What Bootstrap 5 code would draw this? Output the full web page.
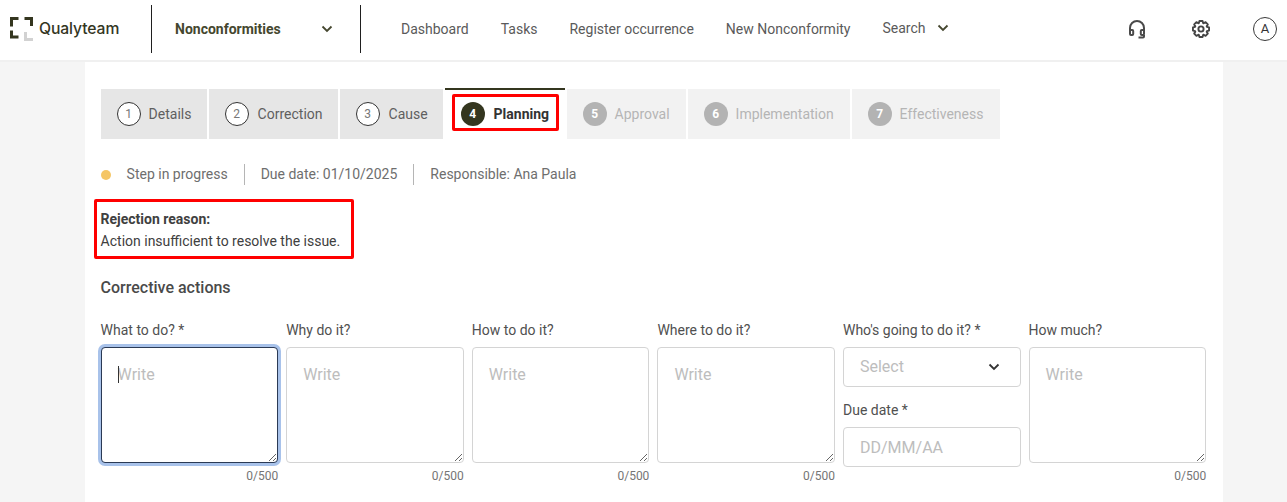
<!DOCTYPE html>
<html lang="en">
<head>
<meta charset="utf-8">
<title>Qualyteam</title>
<link href="https://cdn.jsdelivr.net/npm/bootstrap@5.3.0/dist/css/bootstrap.min.css" rel="stylesheet">
<style>
html,body{height:502px;overflow:hidden}
body{background:#f5f5f5;font-family:Roboto,"Liberation Sans",sans-serif;color:#404040;font-size:14px}
.topbar{height:62px;background:#fff;border-bottom:2px solid #f0f0f0;padding:0 0 2px}
.brand{width:151px;padding-left:10px;gap:6px;height:48px}
.brand-name{font-family:Inter,Roboto,sans-serif;font-size:15.7px;font-weight:500;color:#34361f;letter-spacing:-.1px}
.vline{width:1px;height:48px;background:#1f1f1f;flex:none}
.module{width:208px;height:48px;padding:0 27px 0 23px;font-weight:700;color:#45472f;font-size:14px}
.menu{margin-left:40px;gap:32px;color:#5a5a5a;font-size:14px}
.menu-search{gap:11px;margin-top:-2px}
.tools{margin-left:auto;padding-right:10px;gap:0}
.tool{width:64px}
.tool-last{width:auto;margin-left:20px}
.avatar{width:24px;height:24px;border:1px solid #3a3a3a;border-radius:50%;font-size:13px;color:#333}
.sheet{width:1138px;height:440px;margin-left:85px;background:#fff;padding:26px 17px 0 15.6px}
.steps{height:51px;align-items:flex-end}
.stepper{height:50px;gap:8px;padding:0 0 0 16px;margin-right:2px;color:#5f5f5f;white-space:nowrap}
.wd1{width:106px}.wd2{width:129px;gap:9px}.wd3{width:103px;gap:9px}.wd5{width:119px}.wd6{width:162px}.wd7{width:148px}
.st-done{background:#e6e6e6}
.st-off{background:#f2f2f2;color:#b5b5b5}
.st-now{background:#fff;height:51px;width:120px;border-top:2px solid #34361f;color:#333;font-weight:700;padding:0 0 0 7px}
.st-wrap{outline:3px solid #f00;outline-offset:-3px;border-radius:2px;width:107px;height:37px;margin-top:4px;gap:9px;padding:3px 0 0 9px}
.num{width:24px;height:24px;border-radius:50%;font-size:12px;flex:none;font-weight:400}
.num-done{border:1px solid #333;background:#fff;color:#777}
.num-off{background:#b3b3b3;color:#fff;font-weight:700}
.num-now{background:#34361f;color:#fff;font-weight:700}
.status{margin-top:25px;height:21px;color:#6e6e6e}
.dot{width:10px;height:10px;background:#f5c666;border-radius:50%;margin-right:16px}
.sep{width:1px;height:21px;background:#b5b5b5;margin:0 16px}
.reject{width:260px;height:60px;margin:14px 0 0 -7px;border:3px solid #f00;border-radius:2px;color:#404040;line-height:22px;justify-content:center;padding:2px 0 0 4px}
.section-title{font-size:16px;font-weight:500;color:#4a4a4a;margin:17px 0 0;line-height:24px}
.fields{display:grid;grid-template-columns:repeat(6,1fr);column-gap:8px;margin-top:20px;width:1105.6px}
.lbl{display:block;margin:0 0 7px;line-height:20px;color:#505050;font-size:14px}
.qt-input.form-control,.qt-input.form-select{border:1px solid #d4d4d4;border-radius:4px;font-size:16px;color:#333;box-shadow:none}
.qt-input::placeholder{color:#bdbdbd}
textarea.qt-input.form-control{height:116px;padding:15px 16px;resize:both;line-height:24px;min-height:0}
textarea.qt-input.form-control:focus{border:1px solid #2b3a55;box-shadow:0 0 0 3px #a8c2ea}
.qt-input.form-control.short{height:40px;padding:0 16px}
.qt-input.form-select{height:40px;padding:0 16px;color:#bdbdbd;background-image:none}
.pick,.typing{position:relative}
.pick svg{position:absolute;right:21px;top:16px;pointer-events:none}
.caret-mark{position:absolute;left:17px;top:19px;width:1px;height:17px;background:#333}
.count{text-align:right;font-size:12px;color:#757575;line-height:16px;margin-top:5px}
.lbl-low{margin-top:13px}
</style>
</head>
<body>
<nav class="topbar d-flex align-items-center">
  <div class="brand d-flex align-items-center">
    <svg width="23" height="24" viewBox="0 0 23 24" fill="none" stroke-width="3">
      <path d="M1.500 9.500V1.500H8.500M14.500 1.500H21.500V9M1.500 13.500V20H8.500" stroke="#34361f"/>
      <path d="M15.500 15V22.500H23" stroke="#d2d2d2"/>
    </svg>
    <span class="brand-name">Qualyteam</span>
  </div>
  <span class="vline"></span>
  <div class="module d-flex align-items-center justify-content-between">
    <span>Nonconformities</span>
    <svg width="12" height="8" viewBox="0 0 12 8" fill="none" stroke="#45472f" stroke-width="1.8"><path d="M1.500 1.500 6 6l4.500-4.500"/></svg>
  </div>
  <span class="vline"></span>
  <div class="menu d-flex align-items-center">
    <span>Dashboard</span><span>Tasks</span><span>Register occurrence</span><span>New Nonconformity</span>
    <span class="menu-search d-flex align-items-center">Search
      <svg width="12" height="8" viewBox="0 0 12 8" fill="none" stroke="#45472f" stroke-width="1.8"><path d="M1.500 1.500 6 6l4.500-4.500"/></svg>
    </span>
  </div>
  <div class="tools d-flex align-items-center">
    <span class="tool d-flex justify-content-center">
      <svg width="18" height="19" viewBox="0 0 18 19" fill="none" stroke="#4a4a4a" stroke-width="2"><path d="M2 11V8a7 7 0 0 1 14 0v3"/><rect x="2" y="10" width="3.200" height="5" rx="1"/><rect x="12.800" y="10" width="3.200" height="5" rx="1"/><path d="M16 15v1.500a1 1 0 0 1-1 1h-4.500"/></svg>
    </span>
    <span class="tool d-flex justify-content-center">
      <svg width="18" height="18" viewBox="0 0 18 18" fill="none" stroke="#444" stroke-width="1.900" stroke-linejoin="round"><path d="M14.920 6.850 17.050 7.440V10.560L14.920 11.150 14.710 11.660 15.800 13.580 13.580 15.800 11.660 14.710 11.150 14.920 10.560 17.050H7.440L6.850 14.920 6.340 14.710 4.420 15.800 2.200 13.580 3.290 11.660 3.080 11.150 .95 10.560V7.440L3.080 6.850 3.290 6.340 2.200 4.420 4.420 2.200 6.340 3.290 6.850 3.080 7.440 .95H10.560L11.150 3.080 11.660 3.290 13.580 2.200 15.800 4.420 14.710 6.340z"/><circle cx="9" cy="9" r="2.600"/></svg>
    </span>
    <span class="tool-last avatar d-flex align-items-center justify-content-center">A</span>
  </div>
</nav>
<main class="sheet">
  <div class="steps d-flex">
    <div class="stepper wd1 st-done d-flex align-items-center"><span class="num num-done d-flex align-items-center justify-content-center">1</span>Details</div>
    <div class="stepper wd2 st-done d-flex align-items-center"><span class="num num-done d-flex align-items-center justify-content-center">2</span>Correction</div>
    <div class="stepper wd3 st-done d-flex align-items-center"><span class="num num-done d-flex align-items-center justify-content-center">3</span>Cause</div>
    <div class="stepper st-now d-flex align-items-start"><div class="st-wrap d-flex align-items-center"><span class="num num-now d-flex align-items-center justify-content-center">4</span>Planning</div></div>
    <div class="stepper wd5 st-off d-flex align-items-center"><span class="num num-off d-flex align-items-center justify-content-center">5</span>Approval</div>
    <div class="stepper wd6 st-off d-flex align-items-center"><span class="num num-off d-flex align-items-center justify-content-center">6</span>Implementation</div>
    <div class="stepper wd7 st-off d-flex align-items-center"><span class="num num-off d-flex align-items-center justify-content-center">7</span>Effectiveness</div>
  </div>
  <div class="status d-flex align-items-center">
    <span class="dot"></span><span>Step in progress</span><span class="sep"></span><span>Due date: 01/10/2025</span><span class="sep"></span><span>Responsible: Ana Paula</span>
  </div>
  <div class="reject d-flex flex-column">
    <strong>Rejection reason:</strong>
    <span>Action insufficient to resolve the issue.</span>
  </div>
  <h2 class="section-title">Corrective actions</h2>
  <div class="fields">
    <div><label class="lbl">What to do? *</label><div class="typing"><textarea class="qt-input form-control" placeholder="Write" autofocus></textarea><span class="caret-mark"></span></div><div class="count">0/500</div></div>
    <div><label class="lbl">Why do it?</label><textarea class="qt-input form-control" placeholder="Write"></textarea><div class="count">0/500</div></div>
    <div><label class="lbl">How to do it?</label><textarea class="qt-input form-control" placeholder="Write"></textarea><div class="count">0/500</div></div>
    <div><label class="lbl">Where to do it?</label><textarea class="qt-input form-control" placeholder="Write"></textarea><div class="count">0/500</div></div>
    <div>
      <label class="lbl">Who's going to do it? *</label>
      <div class="pick"><select class="qt-input form-select"><option>Select</option></select>
        <svg width="12" height="8" viewBox="0 0 12 8" fill="none" stroke="#333" stroke-width="1.800"><path d="M1.500 1.500 6 6l4.500-4.500"/></svg></div>
      <label class="lbl lbl-low">Due date *</label>
      <input class="qt-input form-control short" placeholder="DD/MM/AA">
    </div>
    <div><label class="lbl">How much?</label><textarea class="qt-input form-control" placeholder="Write"></textarea><div class="count">0/500</div></div>
  </div>
</main>
<script src="https://cdn.jsdelivr.net/npm/bootstrap@5.3.0/dist/js/bootstrap.bundle.min.js"></script>
</body>
</html>
